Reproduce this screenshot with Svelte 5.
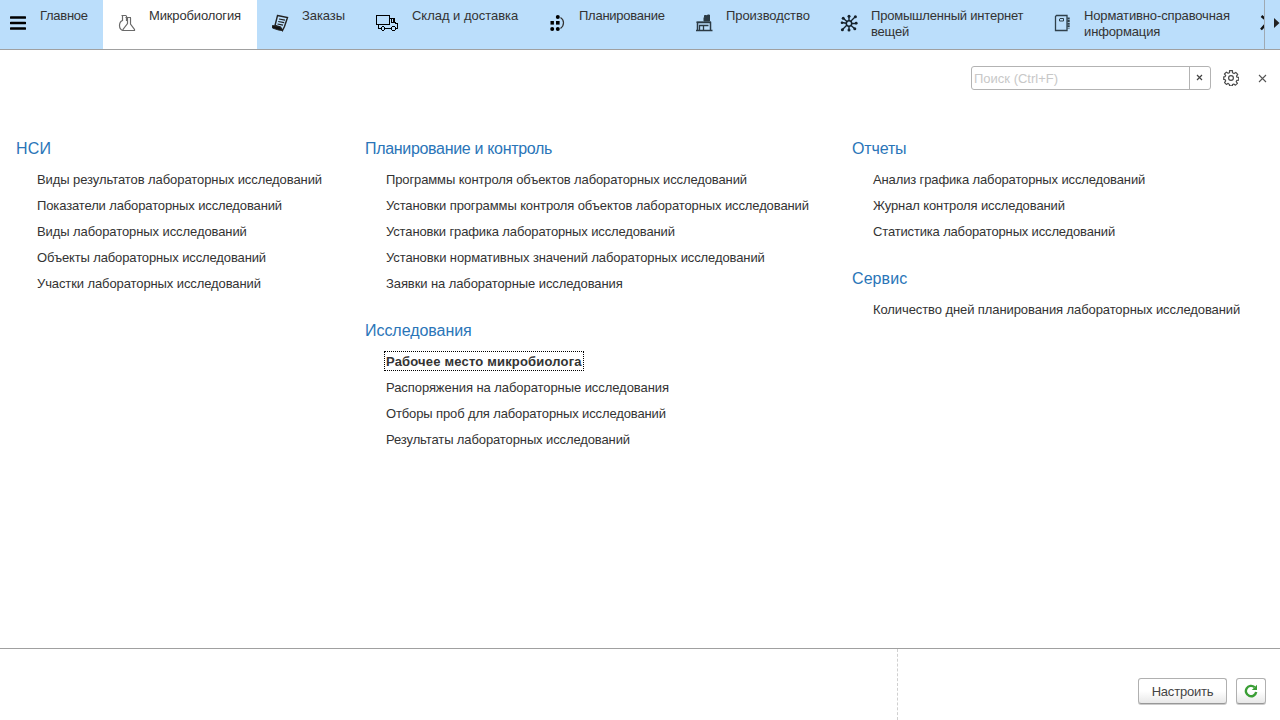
<script>
  // `track` is the letter-spacing in pixels.
  const tabs = [
    { icon: 'menu', label: 'Главное', track: -0.27, width: 103, size: 16, gap: 14, pad: 10 },
    { icon: 'flasks', label: 'Микробиология', track: -0.15, width: 154, size: 18, gap: 13, pad: 15, active: true },
    { icon: 'scroll', label: 'Заказы', track: -0.08, width: 103, size: 18, gap: 13, pad: 14 },
    { icon: 'truck', label: 'Склад и доставка', track: -0.02, width: 174, size: 24, gap: 13, pad: 15 },
    { icon: 'plan', label: 'Планирование', track: -0.25, width: 146, size: 16, gap: 14, pad: 15 },
    { icon: 'factory', label: 'Производство', track: -0.08, width: 145, size: 18, gap: 13, pad: 15 },
    { icon: 'network', label: 'Промышленный интернет вещей', track: -0.2, width: 213, size: 18, gap: 13, pad: 15 },
    { icon: 'book', label: 'Нормативно-справочная информация', track: -0.13, width: 208, size: 16, gap: 14, pad: 16 },
    { icon: 'tools', label: '', track: 0, width: 60, size: 18, gap: 13, pad: 14 }
  ];

  const columns = [
    {
      width: 349,
      groups: [
        {
          title: 'НСИ',
          track: 0.2,
          items: [
            ['Виды результатов лабораторных исследований', -0.075],
            ['Показатели лабораторных исследований', -0.125],
            ['Виды лабораторных исследований', -0.085],
            ['Объекты лабораторных исследований', -0.125],
            ['Участки лабораторных исследований', -0.1]
          ]
        }
      ]
    },
    {
      width: 487,
      groups: [
        {
          title: 'Планирование и контроль',
          track: -0.32,
          items: [
            ['Программы контроля объектов лабораторных исследований', -0.12],
            ['Установки программы контроля объектов лабораторных исследований', -0.11],
            ['Установки графика лабораторных исследований', -0.135],
            ['Установки нормативных значений лабораторных исследований', -0.1],
            ['Заявки на лабораторные исследования', -0.095]
          ]
        },
        {
          title: 'Исследования',
          track: -0.05,
          items: [
            ['Рабочее место микробиолога', 0.18],
            ['Распоряжения на лабораторные исследования', -0.07],
            ['Отборы проб для лабораторных исследований', -0.13],
            ['Результаты лабораторных исследований', -0.11]
          ]
        }
      ]
    },
    {
      width: 420,
      groups: [
        {
          title: 'Отчеты',
          track: -0.15,
          items: [
            ['Анализ графика лабораторных исследований', -0.13],
            ['Журнал контроля исследований', -0.11],
            ['Статистика лабораторных исследований', -0.16]
          ]
        },
        {
          title: 'Сервис',
          track: 0.08,
          items: [['Количество дней планирования лабораторных исследований', -0.09]]
        }
      ]
    }
  ];

  const selected = 'Рабочее место микробиолога';
  let query = $state('');
</script>

{#snippet glyph(name)}
  {#if name === 'menu'}
    <svg width="16" height="18" viewBox="0 0 16 18">
      <path d="M1 3.500h14M1 9h14M1 14.500h14" stroke="#000" stroke-width="2.600" stroke-linecap="round" />
    </svg>
  {:else if name === 'flasks'}
    <svg width="18" height="18" viewBox="0 0 18 18" fill="none" stroke="#6a6a6a" stroke-width="1.200">
      <path d="M3.500 1.500h5M4.500 2v4.500C2 7.500 1.500 9 1.500 11.500C1.500 14 3 16.500 5 16.500M8.500 2v5" />
      <path d="M7.500 3.500h5.500M9.500 4v5.500L5 15.500v1h11.500v-1L12.500 10V4" />
    </svg>
  {:else if name === 'scroll'}
    <svg width="18" height="18" viewBox="0 0 18 18" fill="none" stroke="#222">
      <path d="M6.500 1.500l10 2-3 9-2 4-2-3.500-5.500-1.500z" stroke-width="1.400" />
      <path d="M1.500 11.500l7.500 1.500 2.500 3.500-4-.500-6-2z" fill="#111" />
      <path d="M8 5l6 1.200M7.200 7.500l6 1.200M6.500 10l5.500 1.100" stroke-width="1.200" />
    </svg>
  {:else if name === 'truck'}
    <svg width="24" height="18" viewBox="0 0 24 18" fill="none" stroke="#000" shape-rendering="crispEdges">
      <path d="M1.500 1.500h13v9h-13zM3.500 11v3.500h2.500M9.500 14.500h7M14.500 4.500h5v4l2 1h1v4.500h-2M16.500 5v3.500h3M18.500 5v3" />
      <path d="M6.500 13.500l1-1h1l1 1v2l-1 1h-1l-1-1zM16.500 13.500l1-1h2l1 1v2l-1 1h-2l-1-1z" />
    </svg>
  {:else if name === 'plan'}
    <svg width="16" height="18" viewBox="0 0 16 18" fill="#000">
      <circle cx="8.800" cy="2.900" r="2" /><rect x="1.500" y="7" width="3.400" height="3.600" /><rect x="7" y="7" width="3.600" height="3.600" />
      <circle cx="3.200" cy="15" r="2" /><circle cx="8.800" cy="15" r="2" />
      <path d="M11.500 3.500c4 2.500 4 8 0 11" fill="none" stroke="#333" stroke-width="1.200" />
    </svg>
  {:else if name === 'factory'}
    <svg width="18" height="18" viewBox="0 0 18 18" fill="none" stroke="#2b3a44">
      <path d="M2.500 16.500v-8h13v8M1 16.400h16.500" stroke-width="1.500" />
      <path d="M1.500 8.200h14.500" stroke-width="1.500" />
      <path d="M9 7V3.500h.500v-2h2v.500h1v-1h2V7z" fill="#2b3a44" />
      <path d="M4.500 16v-4.500h4V16M8.500 11.500h5" stroke-width="1.300" />
    </svg>
  {:else if name === 'network'}
    <svg width="18" height="18" viewBox="0 0 18 18" fill="none" stroke="#16222b">
      <circle cx="9" cy="9.500" r="2.700" stroke-width="1.500" />
      <path d="M9 2v5M9 12v4M1.500 8.500l5 .700M12 9.500h4.500M3.500 4.500l4 3.500M15.500 2.500l-5 5M7 11l-5 5M11 11.500l3.500 3" stroke-width="1.400" />
      <g fill="#16222b" stroke="none">
        <circle cx="9" cy="2.200" r="1.500" /><circle cx="3.200" cy="4.200" r="1.500" /><circle cx="15.400" cy="2.700" r="1.500" /><circle cx="2" cy="8.800" r="1.300" />
        <circle cx="16.200" cy="9.200" r="1.400" /><circle cx="2.400" cy="15.700" r="1.500" /><circle cx="9" cy="16" r="1.500" /><circle cx="14.800" cy="14.800" r="1.500" />
      </g>
    </svg>
  {:else if name === 'book'}
    <svg width="16" height="18" viewBox="0 0 16 18" fill="none" stroke="#2f404b">
      <path d="M2.500 1.500h10.500v15h-11.500v-14z" stroke-width="1.300" />
      <path d="M6 4.500h3.500v2.500h-4v-2z" />
      <path d="M14.500 3.500v11" stroke-width="2.400" stroke-dasharray="2 .6" />
    </svg>
  {:else}
    <svg width="18" height="18" viewBox="0 0 18 18" fill="none" stroke="#111">
      <path d="M1.500 2l4 3.500M1 15.500L5 11" stroke-width="2.400" />
    </svg>
  {/if}
{/snippet}

<div class="app">
  <nav class="bar">
    <div class="tabs">
      {#each tabs as tab}
        <div class="tab" class:active={tab.active} style="width:{tab.width}px;padding-left:{tab.pad}px;gap:{tab.gap}px">
          <span class="icon" style="width:{tab.size}px">{@render glyph(tab.icon)}</span>
          <span class="label" style="letter-spacing:{tab.track}px">{tab.label}</span>
        </div>
      {/each}
    </div>
    <div class="next"><svg width="6" height="10" viewBox="0 0 6 10"><path d="M0 0l5.500 5L0 10z" fill="#222" /></svg></div>
  </nav>

  <main>
    <div class="tools">
      <div class="search">
        <input placeholder="Поиск (Ctrl+F)" bind:value={query} />
        <button class="clear" aria-label="Очистить" onclick={() => (query = '')}>
          <svg width="7" height="7" viewBox="0 0 7 7"><path d="M1 1l5 5M6 1L1 6" stroke="#444" stroke-width="1.200" /></svg>
        </button>
      </div>
      <svg class="gear" width="16" height="16" viewBox="0.500 0.500 17 17.400" fill="none" stroke="#4a4a4a" stroke-width="1.300">
        <path d="M7.400 1.200h3.200v2.300l1.700.900 1.900-1.300 2.100 2.200-1.300 1.800.500 1.300 1.900.200v2.900l-2.100.300-.600 1.300 1.300 1.900-2.200 2-1.800-1.200-1.400.600v1.300H7.400v-1.300L5.900 15l-1.900 1.200-2-2 1.200-1.900-.600-1.300-1.500-.300V8l1.500-.300.600-1.300L1.900 4.900 4 2.800l1.800 1.300 1.600-.600z" stroke-linejoin="round" />
        <circle cx="9" cy="9.200" r="2.600" />
      </svg>
      <svg class="close" width="9" height="9" viewBox="0 0 9 9"><path d="M1 1l7 7M8 1L1 8" stroke="#555" stroke-width="1.100" /></svg>
    </div>

    <div class="columns">
      {#each columns as column}
        <div class="column" style="width:{column.width}px">
          {#each column.groups as group}
            <section>
              <h2 style="letter-spacing:{group.track}px">{group.title}</h2>
              <ul>
                {#each group.items as [item, track]}
                  <li style="letter-spacing:{track}px"><span class:selected={item === selected}>{item}</span></li>
                {/each}
              </ul>
            </section>
          {/each}
        </div>
      {/each}
    </div>
  </main>

  <footer>
    <div class="left"></div>
    <div class="right">
      <button class="btn">Настроить</button>
      <button class="btn refresh" aria-label="Обновить">
        <svg width="14" height="14" viewBox="0 0 14 14">
          <path d="M10.600 3.200A5.200 5.200 0 1 0 12.200 8" fill="none" stroke="#3a9e35" stroke-width="2.400" />
          <path d="M13 .8v5.200H7.800z" fill="#3a9e35" />
        </svg>
      </button>
    </div>
  </footer>
</div>

<style>
  :global(body) { margin: 0; background: #fff; }
  .app {
    width: 1280px; height: 720px; display: flex; flex-direction: column; overflow: hidden;
    font: 13px/16px "Liberation Sans", Arial, sans-serif; color: #333;
  }
  .bar { height: 49px; display: flex; background: #bbdefb; border-bottom: 1px solid #a0a0a0; flex: none; }
  .tabs { width: 1264px; display: flex; overflow: hidden; }
  .tab { flex: none; box-sizing: border-box; display: flex; align-items: flex-start; }
  .tab.active { background: #fff; }
  .icon { flex: none; padding-top: 14px; height: 18px; }
  .icon svg { display: block; }
  .label { padding-top: 8px; flex: 1; }
  .next { box-sizing: border-box; width: 16px; height: 49px; border-left: 1px solid #9fa9b2; display: flex; align-items: center; justify-content: flex-end; padding-bottom: 4px; }

  main { flex: 1; }
  .tools { display: flex; align-items: center; justify-content: flex-end; padding: 16px 13px 0 0; height: 24px; }
  .search { box-sizing: border-box; width: 240px; height: 24px; display: flex; border: 1px solid #b3b3b3; border-radius: 3px; }
  input { flex: 1; min-width: 0; border: 0; padding: 1px 2px 0; background: none; outline: none; font: inherit; }
  input::placeholder { color: #c8c8c8; opacity: 1; }
  .clear { box-sizing: border-box; width: 21px; border: 0; border-left: 1px solid #b3b3b3; padding: 0 1px 1px 0; background: none; display: flex; align-items: center; justify-content: center; }
  .gear { margin-left: 12px; }
  .close { margin-left: 19px; }

  .columns { display: flex; padding: 50px 0 0 16px; }
  .column { flex: none; }
  section { margin-bottom: 25px; }
  h2 { margin: 0; font-size: 16px; line-height: 18px; font-weight: 400; color: #2a75b8; }
  ul { list-style: none; margin: 0; padding: 9px 0 0 21px; }
  li { height: 26px; line-height: 26px; white-space: nowrap; }
  .selected { display: inline-block; height: 16px; line-height: 18px; font-weight: 700; outline: 1px dotted #000; outline-offset: 1px; }

  footer { height: 71px; border-top: 1px solid #a0a0a0; display: flex; flex: none; }
  .left { width: 897px; border-right: 1px dashed #d0d0d0; }
  .right { flex: 1; display: flex; justify-content: flex-end; gap: 9px; padding: 29px 14px 0 0; }
  .btn {
    box-sizing: border-box; width: 89px; height: 26px; padding: 0; border: 1px solid #b0b0b0; border-bottom-color: #989898; border-radius: 3px;
    background: linear-gradient(#fff 50%, #e8e8e8); box-shadow: 0 1px 0 #ccc; font: 13px "Liberation Sans", Arial, sans-serif; color: #444;
    letter-spacing: -0.2px; display: flex; align-items: center; justify-content: center;
  }
  .refresh { width: 30px; }
</style>
